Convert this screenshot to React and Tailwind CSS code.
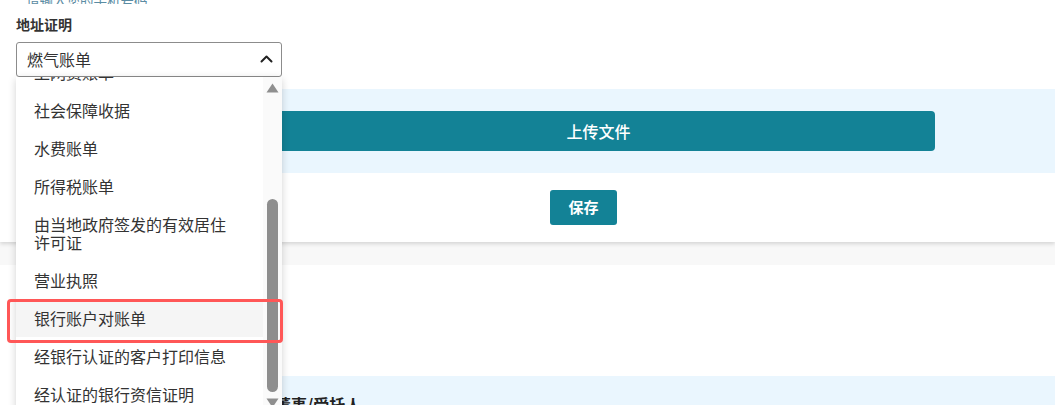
import React from "react";

const items = [
  "上网费账单",
  "社会保障收据",
  "水费账单",
  "所得税账单",
  "由当地政府签发的有效居住许可证",
  "营业执照",
  "银行账户对账单",
  "经银行认证的客户打印信息",
  "经认证的银行资信证明",
];

export default function App() {
  return (
    <div
      className="relative w-[1055px] h-[405px] overflow-hidden bg-white text-[#333]"
      style={{ fontFamily: '"Noto Sans CJK SC", "Noto Sans", sans-serif' }}
    >
      {/* Card 1 */}
      <div className="relative z-10 bg-white pl-4 shadow-[0_2px_4px_rgba(0,0,0,0.14)]">
        <div className="h-[4px] overflow-hidden flex flex-col justify-end pl-[10px]">
          <div className="text-[13.5px] leading-[14px] text-[#5b8ca3] whitespace-nowrap -mb-[3px]">请输入您的手机号码</div>
        </div>
        <div className="mt-[10px] text-[14px] leading-5 font-bold text-[#333]">地址证明</div>
        <div className="mt-2 w-[266px] h-[35px] border border-[#8c8c8c] rounded-[3px] flex items-center justify-between pl-[10px] pr-[8px] pb-[2px]">
          <span className="text-[16px] text-[#333]">燃气账单</span>
          <svg width="13" height="8" viewBox="0 0 13 8" fill="none">
            <path d="M1.5 6.5 L6.5 1.5 L11.5 6.5" stroke="#222" strokeWidth="2" strokeLinecap="round" strokeLinejoin="round" />
          </svg>
        </div>
        <div className="mt-3 h-[84px] bg-[#eaf6fe] pt-[22px]">
          <div className="ml-[246px] w-[673px] h-[40px] rounded-[4px] bg-[#138296] flex items-center justify-center text-white text-[16px] font-medium">
            上传文件
          </div>
        </div>
        <div className="py-[17px]">
          <div className="ml-[534px] w-[67px] h-[35px] rounded-[3px] bg-[#138296] flex items-center justify-center text-white text-[15px] font-bold">
            保存
          </div>
        </div>
      </div>

      {/* Gap */}
      <div className="h-[23px] bg-[#f8f8f8]" />

      {/* Card 2 */}
      <div className="bg-white pl-4 h-[200px]">
        <div className="h-[111px]" />
        <div className="bg-[#eaf6fe] pt-[18px] pl-[259px] h-[100px]">
          <div className="text-[16px] leading-5 font-bold text-[#222]">董事/受托人</div>
        </div>
      </div>

      {/* Dropdown overlay */}
      <div className="absolute left-[16px] top-[77px] w-[266px] h-[340px] bg-white flex shadow-[0_2px_8px_rgba(0,0,0,0.18)] z-20">
        <div className="flex-1 overflow-hidden">
          <div className="-mt-[24px]">
            {items.map((t) => (
              <div
                key={t}
                className={
                  "py-[10px] pl-[18px] pr-[10px] text-[16px] leading-[18px] text-[#333] " +
                  (t === "银行账户对账单" ? "bg-[#f5f5f5]" : "")
                }
              >
                <div className="max-w-[200px]">{t}</div>
              </div>
            ))}
          </div>
        </div>
        <div className="relative w-[19px] bg-[#fafafa] flex flex-col items-center">
          <svg className="mt-[6px]" width="13" height="10" viewBox="0 0 13 10">
            <path d="M6.5 0.5 L12.5 9.5 L0.5 9.5 Z" fill="#8f8f8f" />
          </svg>
          <div className="mt-[106px] w-[11px] h-[193px] rounded-full bg-[#8e8e8e]" />
          <svg className="mt-[6px]" width="13" height="10" viewBox="0 0 13 10">
            <path d="M0.5 0.5 L12.5 0.5 L6.5 9.5 Z" fill="#8f8f8f" />
          </svg>
        </div>
      </div>

      {/* Annotation highlight */}
      <div className="absolute left-[7px] top-[299px] w-[276px] h-[44px] border-[3px] border-[#ff5757] rounded-[4px] z-30" />
    </div>
  );
}
